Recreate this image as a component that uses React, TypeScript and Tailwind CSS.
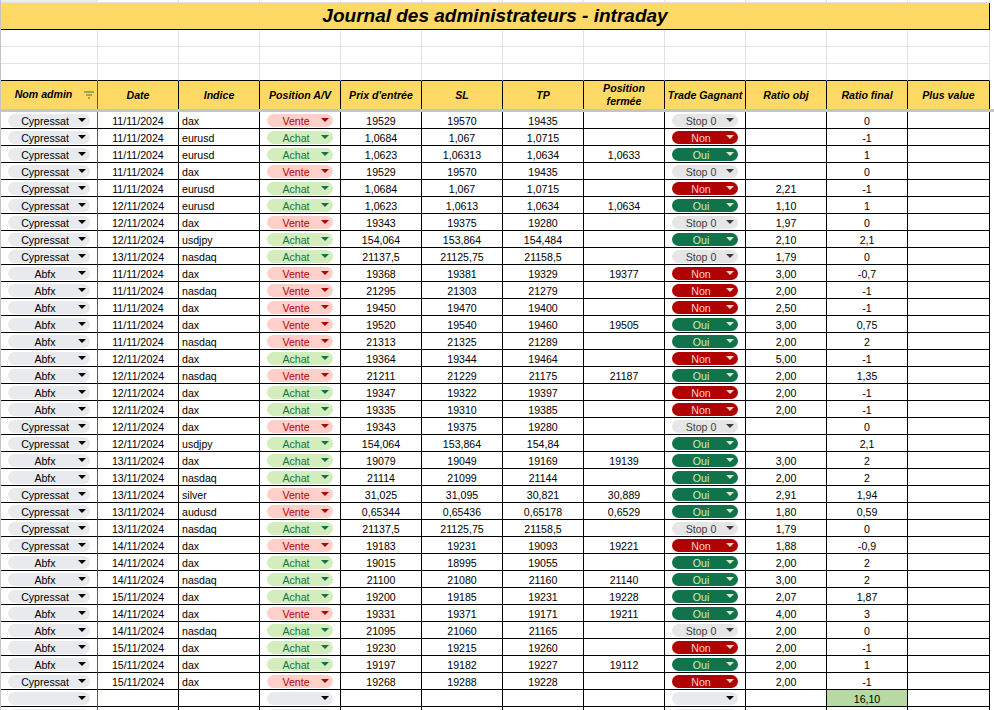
import React from "react";

type Side = "Vente" | "Achat";
type Result = "Oui" | "Non" | "Stop 0";

// nom, date, indice, position, entrée, SL, TP, fermée, gagnant, ratio obj, ratio final
type Trade = [string, string, string, Side, string, string, string, string, Result, string, string];

const trades: Trade[] = [
  ["Cypressat", "11/11/2024", "dax", "Vente", "19529", "19570", "19435", "", "Stop 0", "", "0"],
  ["Cypressat", "11/11/2024", "eurusd", "Achat", "1,0684", "1,067", "1,0715", "", "Non", "", "-1"],
  ["Cypressat", "11/11/2024", "eurusd", "Achat", "1,0623", "1,06313", "1,0634", "1,0633", "Oui", "", "1"],
  ["Cypressat", "11/11/2024", "dax", "Vente", "19529", "19570", "19435", "", "Stop 0", "", "0"],
  ["Cypressat", "11/11/2024", "eurusd", "Achat", "1,0684", "1,067", "1,0715", "", "Non", "2,21", "-1"],
  ["Cypressat", "12/11/2024", "eurusd", "Achat", "1,0623", "1,0613", "1,0634", "1,0634", "Oui", "1,10", "1"],
  ["Cypressat", "12/11/2024", "dax", "Vente", "19343", "19375", "19280", "", "Stop 0", "1,97", "0"],
  ["Cypressat", "12/11/2024", "usdjpy", "Achat", "154,064", "153,864", "154,484", "", "Oui", "2,10", "2,1"],
  ["Cypressat", "13/11/2024", "nasdaq", "Achat", "21137,5", "21125,75", "21158,5", "", "Stop 0", "1,79", "0"],
  ["Abfx", "11/11/2024", "dax", "Vente", "19368", "19381", "19329", "19377", "Non", "3,00", "-0,7"],
  ["Abfx", "11/11/2024", "nasdaq", "Vente", "21295", "21303", "21279", "", "Non", "2,00", "-1"],
  ["Abfx", "11/11/2024", "dax", "Vente", "19450", "19470", "19400", "", "Non", "2,50", "-1"],
  ["Abfx", "11/11/2024", "dax", "Vente", "19520", "19540", "19460", "19505", "Oui", "3,00", "0,75"],
  ["Abfx", "11/11/2024", "nasdaq", "Vente", "21313", "21325", "21289", "", "Oui", "2,00", "2"],
  ["Abfx", "12/11/2024", "dax", "Achat", "19364", "19344", "19464", "", "Non", "5,00", "-1"],
  ["Abfx", "12/11/2024", "nasdaq", "Vente", "21211", "21229", "21175", "21187", "Oui", "2,00", "1,35"],
  ["Abfx", "12/11/2024", "dax", "Achat", "19347", "19322", "19397", "", "Non", "2,00", "-1"],
  ["Abfx", "12/11/2024", "dax", "Achat", "19335", "19310", "19385", "", "Non", "2,00", "-1"],
  ["Cypressat", "12/11/2024", "dax", "Vente", "19343", "19375", "19280", "", "Stop 0", "", "0"],
  ["Cypressat", "12/11/2024", "usdjpy", "Achat", "154,064", "153,864", "154,84", "", "Oui", "", "2,1"],
  ["Abfx", "13/11/2024", "dax", "Achat", "19079", "19049", "19169", "19139", "Oui", "3,00", "2"],
  ["Abfx", "13/11/2024", "nasdaq", "Achat", "21114", "21099", "21144", "", "Oui", "2,00", "2"],
  ["Cypressat", "13/11/2024", "silver", "Vente", "31,025", "31,095", "30,821", "30,889", "Oui", "2,91", "1,94"],
  ["Cypressat", "13/11/2024", "audusd", "Vente", "0,65344", "0,65436", "0,65178", "0,6529", "Oui", "1,80", "0,59"],
  ["Cypressat", "13/11/2024", "nasdaq", "Achat", "21137,5", "21125,75", "21158,5", "", "Stop 0", "1,79", "0"],
  ["Cypressat", "14/11/2024", "dax", "Vente", "19183", "19231", "19093", "19221", "Non", "1,88", "-0,9"],
  ["Abfx", "14/11/2024", "dax", "Achat", "19015", "18995", "19055", "", "Oui", "2,00", "2"],
  ["Abfx", "14/11/2024", "nasdaq", "Achat", "21100", "21080", "21160", "21140", "Oui", "3,00", "2"],
  ["Cypressat", "15/11/2024", "dax", "Achat", "19200", "19185", "19231", "19228", "Oui", "2,07", "1,87"],
  ["Abfx", "14/11/2024", "dax", "Vente", "19331", "19371", "19171", "19211", "Oui", "4,00", "3"],
  ["Abfx", "14/11/2024", "nasdaq", "Achat", "21095", "21060", "21165", "", "Stop 0", "2,00", "0"],
  ["Abfx", "15/11/2024", "dax", "Achat", "19230", "19215", "19260", "", "Non", "2,00", "-1"],
  ["Abfx", "15/11/2024", "dax", "Achat", "19197", "19182", "19227", "19112", "Oui", "2,00", "1"],
  ["Cypressat", "15/11/2024", "dax", "Vente", "19268", "19288", "19228", "", "Non", "2,00", "-1"],
];

const headers = [
  "Nom admin",
  "Date",
  "Indice",
  "Position A/V",
  "Prix d'entrée",
  "SL",
  "TP",
  "Position fermée",
  "Trade Gagnant",
  "Ratio obj",
  "Ratio final",
  "Plus value",
];

const tones: Record<string, string> = {
  name: "bg-[#e8eaed] text-black",
  empty: "bg-[#e8eaed] text-black",
  Vente: "bg-[#ffcfc9] text-[#b10202]",
  Achat: "bg-[#d4edbc] text-[#11734b]",
  Oui: "bg-[#11734b] text-[#d4edbc]",
  Non: "bg-[#b10202] text-[#ffcfc9]",
  "Stop 0": "bg-[#e6e6e6] text-[#3d3d3d]",
};

const cols = "grid grid-cols-[97px_repeat(10,81px)_82px]";

const Chip = ({ label, tone, wide }: { label: string; tone: string; wide?: boolean }) => (
  <div
    className={`mx-auto flex h-[13px] items-center rounded-full pl-1 pr-[4px] ${
      wide ? "w-[82px]" : "w-[66px]"
    } ${tones[tone]}`}
  >
    <span className="mt-[2px] flex-1 text-center leading-[13px]">{label}</span>
    <svg width="8" height="4" viewBox="0 0 8 4" className="shrink-0">
      <path d="M0 0h8L4 4z" fill="currentColor" />
    </svg>
  </div>
);

const FilterIcon = () => (
  <svg width="10" height="8" viewBox="0 0 10 8" className="shrink-0">
    <path d="M0 1h10M2 4h6M4 7h2" stroke="#8c913a" strokeWidth="1.4" />
  </svg>
);

const cell = "h-[17px] border-r border-b border-black leading-[18px] whitespace-nowrap overflow-hidden";
const first = "h-[17px] border-r border-b border-r-[#188038] border-b-black flex items-center";

const TradeRow = ({ t }: { t: Trade }) => (
  <div className={cols}>
    <div className={first}>
      <Chip label={t[0]} tone="name" wide />
    </div>
    <div className={`${cell} text-center`}>{t[1]}</div>
    <div className={`${cell} pl-[3px]`}>{t[2]}</div>
    <div className={`${cell} flex items-center`}>
      <Chip label={t[3]} tone={t[3]} />
    </div>
    <div className={`${cell} text-center`}>{t[4]}</div>
    <div className={`${cell} text-center`}>{t[5]}</div>
    <div className={`${cell} text-center`}>{t[6]}</div>
    <div className={`${cell} text-center`}>{t[7]}</div>
    <div className={`${cell} flex items-center`}>
      <Chip label={t[8]} tone={t[8]} />
    </div>
    <div className={`${cell} text-center`}>{t[9]}</div>
    <div className={`${cell} text-center`}>{t[10]}</div>
    <div className={cell}></div>
  </div>
);

const BlankRow = ({ total }: { total?: string }) => (
  <div className={cols}>
    <div className={first}>
      <Chip label="" tone="empty" wide />
    </div>
    <div className={cell}></div>
    <div className={cell}></div>
    <div className={`${cell} flex items-center`}>
      <Chip label="" tone="empty" />
    </div>
    <div className={cell}></div>
    <div className={cell}></div>
    <div className={cell}></div>
    <div className={cell}></div>
    <div className={`${cell} flex items-center`}>
      <Chip label="" tone="empty" />
    </div>
    <div className={cell}></div>
    <div className={`${cell} text-center ${total ? "bg-[#b7d9a4]" : ""}`}>{total}</div>
    <div className={cell}></div>
  </div>
);

const GreyRow = ({ h, last }: { h: string; last?: boolean }) => (
  <div className={cols}>
    {headers.map((_, i) => (
      <div
        key={i}
        className={`${h} border-r border-b border-r-[#e2e2e2] ${last ? "border-b-black" : "border-b-[#e2e2e2]"} ${
          i === 0 && h === "h-[3px]" ? "bg-[#e6f2e8]" : ""
        }`}
      ></div>
    ))}
  </div>
);

export default function App() {
  return (
    <div className="h-[710px] w-[994px] overflow-hidden bg-white font-['Liberation_Sans',Arial,sans-serif] text-[10.6px] text-black">
      <div className="border-l border-[#c4c4c4]">
        {/* TOP */}
        <GreyRow h="h-[3px]" />
        <div className="flex h-[27px] w-[989px] items-center justify-center border-r border-b border-black bg-[#ffd966] pt-px text-[19px] font-bold italic">
          Journal des administrateurs - intraday
        </div>
        <GreyRow h="h-[17px]" />
        <GreyRow h="h-[17px]" />
        <GreyRow h="h-[17px]" last />

        {/* HEADER */}
        <div className={cols}>
          {headers.map((h, i) =>
            i === 0 ? (
              <div
                key={h}
                className="flex h-[28px] items-center border-r border-[#188038] bg-[#ffd966] pl-[2px] pr-[3px] font-bold italic"
              >
                <span className="flex-1 text-center">{h}</span>
                <FilterIcon />
              </div>
            ) : (
              <div
                key={h}
                className="flex h-[28px] items-center justify-center border-r border-black bg-[#ffd966] text-center font-bold italic leading-[13px] whitespace-pre-line"
              >
                {h === "Position fermée" ? "Position\nfermée" : h}
              </div>
            )
          )}
        </div>
        <div className="h-[3px] w-[994px] bg-[#c4c4c4]"></div>

        {/* LIST */}
        {trades.map((t, i) => (
          <TradeRow key={i} t={t} />
        ))}
        <BlankRow total="16,10" />
        <BlankRow />
      </div>
    </div>
  );
}
